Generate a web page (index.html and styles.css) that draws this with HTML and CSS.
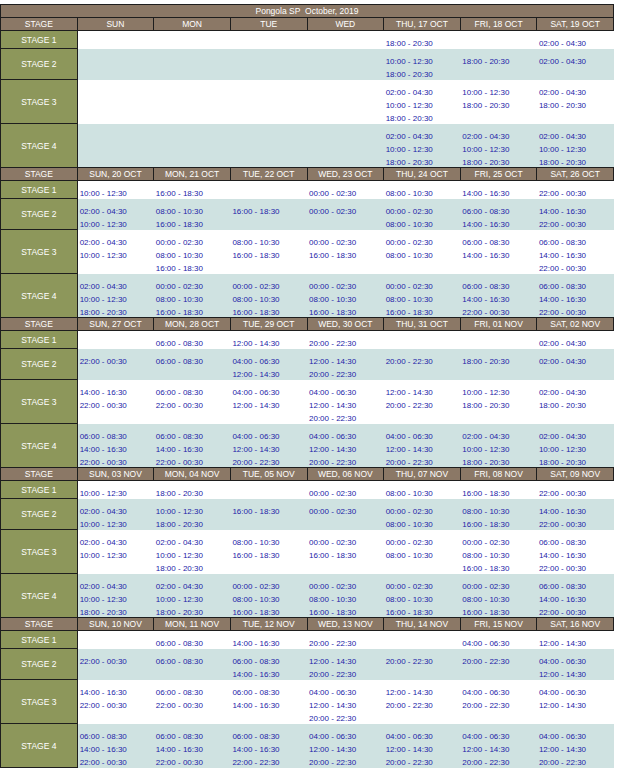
FILE: index.html
```html
<!DOCTYPE html>
<html lang="en">
<head>
<meta charset="utf-8">
<title>Pongola SP October, 2019</title>
<link rel="stylesheet" href="styles.css">
</head>
<body>
<table class="schedule">
<tr class="title"><th colspan="8">Pongola SP&nbsp; October, 2019</th></tr>

<tr class="head"><th>STAGE</th><th>SUN</th><th>MON</th><th>TUE</th><th>WED</th><th>THU, 17 OCT</th><th>FRI, 18 OCT</th><th>SAT, 19 OCT</th></tr>
<tr class="l1"><td class="stage">STAGE 1</td><td class="slot"></td><td class="slot"></td><td class="slot"></td><td class="slot"></td><td class="slot"><div class="times">18:00 - 20:30</div></td><td class="slot"></td><td class="slot"><div class="times">02:00 - 04:30</div></td></tr>
<tr class="l2 alt"><td class="stage">STAGE 2</td><td class="slot"></td><td class="slot"></td><td class="slot"></td><td class="slot"></td><td class="slot"><div class="times">10:00 - 12:30<br>18:00 - 20:30</div></td><td class="slot"><div class="times">18:00 - 20:30</div></td><td class="slot"><div class="times">02:00 - 04:30</div></td></tr>
<tr class="l3"><td class="stage">STAGE 3</td><td class="slot"></td><td class="slot"></td><td class="slot"></td><td class="slot"></td><td class="slot"><div class="times">02:00 - 04:30<br>10:00 - 12:30<br>18:00 - 20:30</div></td><td class="slot"><div class="times">10:00 - 12:30<br>18:00 - 20:30</div></td><td class="slot"><div class="times">02:00 - 04:30<br>18:00 - 20:30</div></td></tr>
<tr class="l3 alt"><td class="stage">STAGE 4</td><td class="slot"></td><td class="slot"></td><td class="slot"></td><td class="slot"></td><td class="slot"><div class="times">02:00 - 04:30<br>10:00 - 12:30<br>18:00 - 20:30</div></td><td class="slot"><div class="times">02:00 - 04:30<br>10:00 - 12:30<br>18:00 - 20:30</div></td><td class="slot"><div class="times">02:00 - 04:30<br>10:00 - 12:30<br>18:00 - 20:30</div></td></tr>

<tr class="head"><th>STAGE</th><th>SUN, 20 OCT</th><th>MON, 21 OCT</th><th>TUE, 22 OCT</th><th>WED, 23 OCT</th><th>THU, 24 OCT</th><th>FRI, 25 OCT</th><th>SAT, 26 OCT</th></tr>
<tr class="l1"><td class="stage">STAGE 1</td><td class="slot"><div class="times">10:00 - 12:30</div></td><td class="slot"><div class="times">16:00 - 18:30</div></td><td class="slot"></td><td class="slot"><div class="times">00:00 - 02:30</div></td><td class="slot"><div class="times">08:00 - 10:30</div></td><td class="slot"><div class="times">14:00 - 16:30</div></td><td class="slot"><div class="times">22:00 - 00:30</div></td></tr>
<tr class="l2 alt"><td class="stage">STAGE 2</td><td class="slot"><div class="times">02:00 - 04:30<br>10:00 - 12:30</div></td><td class="slot"><div class="times">08:00 - 10:30<br>16:00 - 18:30</div></td><td class="slot"><div class="times">16:00 - 18:30</div></td><td class="slot"><div class="times">00:00 - 02:30</div></td><td class="slot"><div class="times">00:00 - 02:30<br>08:00 - 10:30</div></td><td class="slot"><div class="times">06:00 - 08:30<br>14:00 - 16:30</div></td><td class="slot"><div class="times">14:00 - 16:30<br>22:00 - 00:30</div></td></tr>
<tr class="l3"><td class="stage">STAGE 3</td><td class="slot"><div class="times">02:00 - 04:30<br>10:00 - 12:30</div></td><td class="slot"><div class="times">00:00 - 02:30<br>08:00 - 10:30<br>16:00 - 18:30</div></td><td class="slot"><div class="times">08:00 - 10:30<br>16:00 - 18:30</div></td><td class="slot"><div class="times">00:00 - 02:30<br>16:00 - 18:30</div></td><td class="slot"><div class="times">00:00 - 02:30<br>08:00 - 10:30</div></td><td class="slot"><div class="times">06:00 - 08:30<br>14:00 - 16:30</div></td><td class="slot"><div class="times">06:00 - 08:30<br>14:00 - 16:30<br>22:00 - 00:30</div></td></tr>
<tr class="l3 alt"><td class="stage">STAGE 4</td><td class="slot"><div class="times">02:00 - 04:30<br>10:00 - 12:30<br>18:00 - 20:30</div></td><td class="slot"><div class="times">00:00 - 02:30<br>08:00 - 10:30<br>16:00 - 18:30</div></td><td class="slot"><div class="times">00:00 - 02:30<br>08:00 - 10:30<br>16:00 - 18:30</div></td><td class="slot"><div class="times">00:00 - 02:30<br>08:00 - 10:30<br>16:00 - 18:30</div></td><td class="slot"><div class="times">00:00 - 02:30<br>08:00 - 10:30<br>16:00 - 18:30</div></td><td class="slot"><div class="times">06:00 - 08:30<br>14:00 - 16:30<br>22:00 - 00:30</div></td><td class="slot"><div class="times">06:00 - 08:30<br>14:00 - 16:30<br>22:00 - 00:30</div></td></tr>

<tr class="head"><th>STAGE</th><th>SUN, 27 OCT</th><th>MON, 28 OCT</th><th>TUE, 29 OCT</th><th>WED, 30 OCT</th><th>THU, 31 OCT</th><th>FRI, 01 NOV</th><th>SAT, 02 NOV</th></tr>
<tr class="l1"><td class="stage">STAGE 1</td><td class="slot"></td><td class="slot"><div class="times">06:00 - 08:30</div></td><td class="slot"><div class="times">12:00 - 14:30</div></td><td class="slot"><div class="times">20:00 - 22:30</div></td><td class="slot"></td><td class="slot"></td><td class="slot"><div class="times">02:00 - 04:30</div></td></tr>
<tr class="l2 alt"><td class="stage">STAGE 2</td><td class="slot"><div class="times">22:00 - 00:30</div></td><td class="slot"><div class="times">06:00 - 08:30</div></td><td class="slot"><div class="times">04:00 - 06:30<br>12:00 - 14:30</div></td><td class="slot"><div class="times">12:00 - 14:30<br>20:00 - 22:30</div></td><td class="slot"><div class="times">20:00 - 22:30</div></td><td class="slot"><div class="times">18:00 - 20:30</div></td><td class="slot"><div class="times">02:00 - 04:30</div></td></tr>
<tr class="l3"><td class="stage">STAGE 3</td><td class="slot"><div class="times">14:00 - 16:30<br>22:00 - 00:30</div></td><td class="slot"><div class="times">06:00 - 08:30<br>22:00 - 00:30</div></td><td class="slot"><div class="times">04:00 - 06:30<br>12:00 - 14:30</div></td><td class="slot"><div class="times">04:00 - 06:30<br>12:00 - 14:30<br>20:00 - 22:30</div></td><td class="slot"><div class="times">12:00 - 14:30<br>20:00 - 22:30</div></td><td class="slot"><div class="times">10:00 - 12:30<br>18:00 - 20:30</div></td><td class="slot"><div class="times">02:00 - 04:30<br>18:00 - 20:30</div></td></tr>
<tr class="l3 alt"><td class="stage">STAGE 4</td><td class="slot"><div class="times">06:00 - 08:30<br>14:00 - 16:30<br>22:00 - 00:30</div></td><td class="slot"><div class="times">06:00 - 08:30<br>14:00 - 16:30<br>22:00 - 00:30</div></td><td class="slot"><div class="times">04:00 - 06:30<br>12:00 - 14:30<br>20:00 - 22:30</div></td><td class="slot"><div class="times">04:00 - 06:30<br>12:00 - 14:30<br>20:00 - 22:30</div></td><td class="slot"><div class="times">04:00 - 06:30<br>12:00 - 14:30<br>20:00 - 22:30</div></td><td class="slot"><div class="times">02:00 - 04:30<br>10:00 - 12:30<br>18:00 - 20:30</div></td><td class="slot"><div class="times">02:00 - 04:30<br>10:00 - 12:30<br>18:00 - 20:30</div></td></tr>

<tr class="head"><th>STAGE</th><th>SUN, 03 NOV</th><th>MON, 04 NOV</th><th>TUE, 05 NOV</th><th>WED, 06 NOV</th><th>THU, 07 NOV</th><th>FRI, 08 NOV</th><th>SAT, 09 NOV</th></tr>
<tr class="l1"><td class="stage">STAGE 1</td><td class="slot"><div class="times">10:00 - 12:30</div></td><td class="slot"><div class="times">18:00 - 20:30</div></td><td class="slot"></td><td class="slot"><div class="times">00:00 - 02:30</div></td><td class="slot"><div class="times">08:00 - 10:30</div></td><td class="slot"><div class="times">16:00 - 18:30</div></td><td class="slot"><div class="times">22:00 - 00:30</div></td></tr>
<tr class="l2 alt"><td class="stage">STAGE 2</td><td class="slot"><div class="times">02:00 - 04:30<br>10:00 - 12:30</div></td><td class="slot"><div class="times">10:00 - 12:30<br>18:00 - 20:30</div></td><td class="slot"><div class="times">16:00 - 18:30</div></td><td class="slot"><div class="times">00:00 - 02:30</div></td><td class="slot"><div class="times">00:00 - 02:30<br>08:00 - 10:30</div></td><td class="slot"><div class="times">08:00 - 10:30<br>16:00 - 18:30</div></td><td class="slot"><div class="times">14:00 - 16:30<br>22:00 - 00:30</div></td></tr>
<tr class="l3"><td class="stage">STAGE 3</td><td class="slot"><div class="times">02:00 - 04:30<br>10:00 - 12:30</div></td><td class="slot"><div class="times">02:00 - 04:30<br>10:00 - 12:30<br>18:00 - 20:30</div></td><td class="slot"><div class="times">08:00 - 10:30<br>16:00 - 18:30</div></td><td class="slot"><div class="times">00:00 - 02:30<br>16:00 - 18:30</div></td><td class="slot"><div class="times">00:00 - 02:30<br>08:00 - 10:30</div></td><td class="slot"><div class="times">00:00 - 02:30<br>08:00 - 10:30<br>16:00 - 18:30</div></td><td class="slot"><div class="times">06:00 - 08:30<br>14:00 - 16:30<br>22:00 - 00:30</div></td></tr>
<tr class="l3 alt"><td class="stage">STAGE 4</td><td class="slot"><div class="times">02:00 - 04:30<br>10:00 - 12:30<br>18:00 - 20:30</div></td><td class="slot"><div class="times">02:00 - 04:30<br>10:00 - 12:30<br>18:00 - 20:30</div></td><td class="slot"><div class="times">00:00 - 02:30<br>08:00 - 10:30<br>16:00 - 18:30</div></td><td class="slot"><div class="times">00:00 - 02:30<br>08:00 - 10:30<br>16:00 - 18:30</div></td><td class="slot"><div class="times">00:00 - 02:30<br>08:00 - 10:30<br>16:00 - 18:30</div></td><td class="slot"><div class="times">00:00 - 02:30<br>08:00 - 10:30<br>16:00 - 18:30</div></td><td class="slot"><div class="times">06:00 - 08:30<br>14:00 - 16:30<br>22:00 - 00:30</div></td></tr>

<tr class="head"><th>STAGE</th><th>SUN, 10 NOV</th><th>MON, 11 NOV</th><th>TUE, 12 NOV</th><th>WED, 13 NOV</th><th>THU, 14 NOV</th><th>FRI, 15 NOV</th><th>SAT, 16 NOV</th></tr>
<tr class="l1"><td class="stage">STAGE 1</td><td class="slot"></td><td class="slot"><div class="times">06:00 - 08:30</div></td><td class="slot"><div class="times">14:00 - 16:30</div></td><td class="slot"><div class="times">20:00 - 22:30</div></td><td class="slot"></td><td class="slot"><div class="times">04:00 - 06:30</div></td><td class="slot"><div class="times">12:00 - 14:30</div></td></tr>
<tr class="l2 alt"><td class="stage">STAGE 2</td><td class="slot"><div class="times">22:00 - 00:30</div></td><td class="slot"><div class="times">06:00 - 08:30</div></td><td class="slot"><div class="times">06:00 - 08:30<br>14:00 - 16:30</div></td><td class="slot"><div class="times">12:00 - 14:30<br>20:00 - 22:30</div></td><td class="slot"><div class="times">20:00 - 22:30</div></td><td class="slot"><div class="times">20:00 - 22:30</div></td><td class="slot"><div class="times">04:00 - 06:30<br>12:00 - 14:30</div></td></tr>
<tr class="l3"><td class="stage">STAGE 3</td><td class="slot"><div class="times">14:00 - 16:30<br>22:00 - 00:30</div></td><td class="slot"><div class="times">06:00 - 08:30<br>22:00 - 00:30</div></td><td class="slot"><div class="times">06:00 - 08:30<br>14:00 - 16:30</div></td><td class="slot"><div class="times">04:00 - 06:30<br>12:00 - 14:30<br>20:00 - 22:30</div></td><td class="slot"><div class="times">12:00 - 14:30<br>20:00 - 22:30</div></td><td class="slot"><div class="times">04:00 - 06:30<br>20:00 - 22:30</div></td><td class="slot"><div class="times">04:00 - 06:30<br>12:00 - 14:30</div></td></tr>
<tr class="l3 alt"><td class="stage">STAGE 4</td><td class="slot"><div class="times">06:00 - 08:30<br>14:00 - 16:30<br>22:00 - 00:30</div></td><td class="slot"><div class="times">06:00 - 08:30<br>14:00 - 16:30<br>22:00 - 00:30</div></td><td class="slot"><div class="times">06:00 - 08:30<br>14:00 - 16:30<br>22:00 - 22:30</div></td><td class="slot"><div class="times">04:00 - 06:30<br>12:00 - 14:30<br>20:00 - 22:30</div></td><td class="slot"><div class="times">04:00 - 06:30<br>12:00 - 14:30<br>20:00 - 22:30</div></td><td class="slot"><div class="times">04:00 - 06:30<br>12:00 - 14:30<br>20:00 - 22:30</div></td><td class="slot"><div class="times">04:00 - 06:30<br>12:00 - 14:30<br>20:00 - 22:30</div></td></tr>
</table>
</body>
</html>
```
FILE: styles.css
```css
html, body {
  margin: 0;
  padding: 0;
  background: #ffffff;
}

body {
  padding-top: 4px;
  font-family: "Liberation Sans", Arial, Helvetica, sans-serif;
}

.schedule {
  border-collapse: collapse;
  table-layout: fixed;
  width: 614px;
}

.title { height: 13px; }
.head { height: 13px; }
.l1 { height: 18px; }
.l2 { height: 31px; }
.l3 { height: 44px; }

.schedule th {
  background: #8b7866;
  color: #ffffff;
  font-weight: normal;
  font-size: 8.5px;
  line-height: 10px;
  padding: 0;
  border: 1px solid #1e1e1e;
  text-align: center;
  white-space: nowrap;
  overflow: hidden;
}

.stage {
  background: #8d975b;
  color: #ffffff;
  font-size: 8.5px;
  line-height: 10px;
  text-align: center;
  vertical-align: middle;
  padding: 0;
  border: 1px solid #1e1e1e;
  white-space: nowrap;
}

.slot {
  vertical-align: top;
  padding: 6px 0 0 2px;
  color: #2323a8;
  font-size: 8px;
  line-height: 13px;
  white-space: nowrap;
}

.alt .slot {
  background: #cfe2e1;
}

.times {
  margin-bottom: -4px;
}
```
